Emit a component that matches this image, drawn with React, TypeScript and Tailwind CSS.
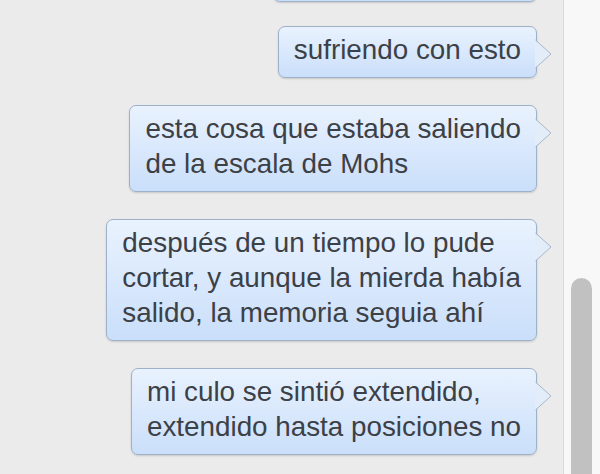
import React from "react";

type BubbleProps = {
  lines?: string[];
  className?: string;
};

const Tail = () => (
  <svg
    className="absolute right-[-17px] top-[12px]"
    width="18"
    height="30"
    viewBox="0 0 18 30"
  >
    <polygon points="0,1 16,15 0,29" fill="#e3ecf9" />
    <polyline
      points="0.5,1 16,15 0.5,29"
      fill="none"
      stroke="#a7b6c9"
      strokeWidth="1"
    />
  </svg>
);

const Bubble: React.FC<BubbleProps> = ({ lines = [], className = "" }) => (
  <div
    className={
      "relative shrink-0 rounded-[7px] border border-[#9fb1c9] bg-gradient-to-b from-[#e9f2fe] to-[#cadffa] px-[15px] pt-[5px] pb-[10px] shadow-[0_1px_2px_rgba(0,0,0,0.15)] " +
      className
    }
  >
    <p className="whitespace-nowrap text-[27.8px] leading-[35px] text-[#3c4047]">
      {lines.map((line, i) => (
        <React.Fragment key={i}>
          {i > 0 && <br />}
          {line}
        </React.Fragment>
      ))}
    </p>
    <Tail />
  </div>
);

const messages: string[][] = [
  ["sufriendo con esto"],
  ["esta cosa que estaba saliendo", "de la escala de Mohs"],
  [
    "después de un tiempo lo pude",
    "cortar, y aunque la mierda había",
    "salido, la memoria seguia ahí",
  ],
  ["mi culo se sintió extendido,", "extendido hasta posiciones no"],
];

export default function App() {
  return (
    <div
      className="flex h-[474px] w-[600px] overflow-hidden"
      style={{ fontFamily: '"Liberation Sans", Arial, sans-serif' }}
    >
      <div className="flex flex-1 flex-col items-end gap-[27px] bg-[#ebebeb] pt-[26px] pr-[26px]">
        <Bubble className="mt-[-76px] mb-[-3px] h-[52px] w-[264px]" />
        {messages.map((m, i) => (
          <Bubble key={i} lines={m} />
        ))}
      </div>
      <div className="flex w-[37px] shrink-0 flex-col border-l border-[#dadada] bg-[#f8f8f8] pt-[278px] pl-[7px] pr-[8px]">
        <div className="flex-1 rounded-t-full bg-[#c1c1c1]" />
      </div>
    </div>
  );
}
